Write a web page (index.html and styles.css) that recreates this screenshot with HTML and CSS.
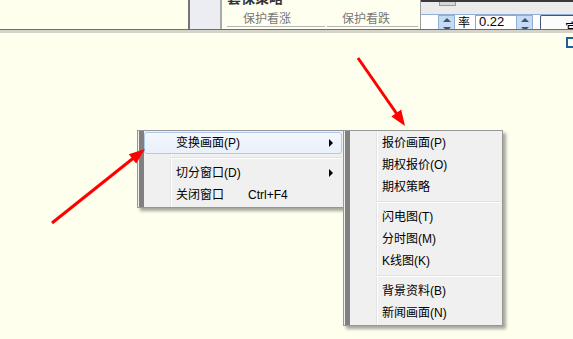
FILE: index.html
```html
<!DOCTYPE html>
<html lang="zh-CN">

<head>
    <meta charset="UTF-8">
    <title>期权画面</title>
    <link rel="stylesheet" href="styles.css">
</head>

<body>

    <div class="topbar">
        <div class="blank"></div>
        <div class="side"></div>
        <div class="strategy">
            <div class="strategy-title">套保策略</div>
            <div class="tabs">
                <div class="tab">保护看涨</div>
                <div class="tab tab-2">保护看跌</div>
            </div>
        </div>
        <div class="panel">
            <div class="hscroll">
                <div class="thumb"></div>
            </div>
            <div class="controls">
                <div class="spin"><i class="up"></i><i class="down"></i></div>
                <span class="rate">率</span>
                <div class="field">0.22</div>
                <div class="spin"><i class="up"></i><i class="down"></i></div>
                <div class="btn">官</div>
            </div>
        </div>
    </div>
    <div class="splitter"></div>
    <div class="corner"><div class="corner-icon"></div></div>

    <!-- 右键菜单 -->
    <div class="menu menu-main">
        <div class="item active"><span class="label">变换画面(P)</span><span class="sub"></span></div>
        <div class="sep"></div>
        <div class="item"><span class="label">切分窗口(D)</span><span class="sub"></span></div>
        <div class="item"><span class="label">关闭窗口</span><span class="key">Ctrl+F4</span></div>
    </div>

    <div class="menu menu-sub">
        <div class="item"><span class="label">报价画面(P)</span></div>
        <div class="item"><span class="label">期权报价(O)</span></div>
        <div class="item"><span class="label">期权策略</span></div>
        <div class="sep"></div>
        <div class="item"><span class="label">闪电图(T)</span></div>
        <div class="item"><span class="label">分时图(M)</span></div>
        <div class="item"><span class="label">K线图(K)</span></div>
        <div class="sep"></div>
        <div class="item"><span class="label">背景资料(B)</span></div>
        <div class="item"><span class="label">新闻画面(N)</span></div>
    </div>

    <!-- 标注箭头 -->
    <svg class="marks" width="573" height="339" viewBox="0 0 573 339">
        <line x1="52" y1="223" x2="136" y2="156" stroke="#ff0000" stroke-width="3" />
        <polygon points="145,149 128.8,154.2 136.2,163.6" fill="#ff0000" />
        <line x1="358" y1="58" x2="399" y2="117" stroke="#ff0000" stroke-width="3" />
        <polygon points="405,126 401.2,109.6 391.4,116.4" fill="#ff0000" />
    </svg>

</body>

</html>
```

FILE: styles.css
```css
* {
    margin: 0;
    padding: 0;
    box-sizing: border-box;
}

html,
body {
    width: 100%;
    height: 100%;
}

body {
    background: #ffffee;
    font-family: "Liberation Sans", "Noto Sans CJK SC", sans-serif;
    font-size: 12px;
    color: #000;
    overflow: hidden;
    position: relative;
}

/* 顶部面板 */
.topbar {
    height: 29px;
    display: flex;
    overflow: hidden;
}

.blank {
    width: 188px;
    flex-shrink: 0;
}

.side {
    width: 34px;
    flex-shrink: 0;
    background: #ececf3;
    border-left: 2px solid #747474;
    border-right: 2px solid #a9a9a9;
}

.strategy {
    width: 198px;
    flex-shrink: 0;
    overflow: hidden;
    background: #fffff0;
}

.strategy-title {
    height: 7px;
    margin-top: -2px;
    padding-left: 5px;
    font-size: 14px;
    line-height: 1;
    font-weight: bold;
    color: #333;
    overflow: hidden;
    display: flex;
    align-items: flex-end;
}

.tabs {
    display: flex;
    gap: 2px;
    margin-left: 5px;
    margin-top: 8px;
}

.tab {
    width: 98px;
    height: 14px;
    line-height: 13px;
    padding-left: 16px;
    border-bottom: 1px solid #b4b4b4;
    color: #777;
    font-size: 12px;
}

.tab-2 {
    width: 91px;
    padding-left: 15px;
}

.panel {
    flex: 1;
    min-width: 0;
    overflow: hidden;
    border-left: 1px solid #9c9c9c;
    display: flex;
    flex-direction: column;
}

.hscroll {
    height: 15px;
    flex-shrink: 0;
    background: #ebebeb;
    border-top: 2px solid #3a3a3a;
    border-bottom: 1px solid #8fb0d2;
    padding-left: 18px;
}

.thumb {
    width: 17px;
    height: 4px;
    background: #d6d6d6;
    border: 1px solid #9a9a9a;
    border-top: none;
}

.controls {
    flex: 1;
    background: #fff;
    display: flex;
    align-items: stretch;
    padding-left: 17px;
}

.spin {
    width: 17px;
    flex-shrink: 0;
    background: #c6dbf2;
    border: 1px solid #90b0d4;
    display: flex;
    flex-direction: column;
    align-items: center;
    justify-content: space-around;
}

.spin i {
    width: 0;
    height: 0;
    border-left: 4px solid transparent;
    border-right: 4px solid transparent;
}

.spin .up {
    border-bottom: 4px solid #36567a;
}

.spin .down {
    border-top: 4px solid #36567a;
}

.rate {
    width: 20px;
    flex-shrink: 0;
    padding-left: 3px;
    font-size: 12px;
    line-height: 14px;
    font-family: "Noto Sans CJK SC", sans-serif;
}

.field {
    width: 41px;
    flex-shrink: 0;
    border: 1px solid #8fa8c4;
    border-right: none;
    padding-left: 3px;
    font-size: 13px;
    line-height: 12px;
}

.btn {
    margin-left: 7px;
    flex: 1;
    min-width: 0;
    border: 1px solid #3e5877;
    border-right: none;
    border-bottom: none;
    border-radius: 2px 0 0 0;
    background: #fbfbfb;
    padding-left: 24px;
    padding-top: 4px;
    font-size: 14px;
    line-height: 14px;
    font-family: "Noto Sans CJK SC", sans-serif;
    white-space: nowrap;
}

.splitter {
    height: 4px;
    border-top: 1px solid #6e6e6e;
    background: #d6d3cb;
}

.corner {
    display: flex;
    justify-content: flex-end;
    padding-top: 4px;
}

.corner-icon {
    width: 7px;
    height: 11px;
    border: 2px solid #1d5f9c;
    border-right: none;
}

/* 右键菜单 */
.menu {
    position: absolute;
    top: 130px;
    border: 1px solid #979797;
    padding: 1px 1px 1px 6px;
    background:
        linear-gradient(to right, transparent 32px, #e3e3e3 32px, #e3e3e3 33px, #ffffff 33px, #ffffff 34px, transparent 34px),
        linear-gradient(to right, #f0f0f0 1px, #808080 1px, #808080 6px, #f0f0f0 6px);
    box-shadow: 3px 3px 3px rgba(0, 0, 0, 0.35);
}

.menu-main {
    left: 137px;
    width: 207px;
}

.menu-sub {
    left: 343px;
    width: 160px;
}

.item {
    height: 22px;
    line-height: 22px;
    padding-left: 32px;
    display: flex;
    align-items: center;
    white-space: nowrap;
}

.item.active {
    border: 1px solid #aecbef;
    border-radius: 3px;
    padding-left: 31px;
    background: linear-gradient(#f4f7fc, #e9f0f9);
}

.label {
    min-width: 72px;
}

.sub {
    margin-left: auto;
    margin-right: 9px;
    width: 0;
    height: 0;
    border-top: 4px solid transparent;
    border-bottom: 4px solid transparent;
    border-left: 4px solid #000;
}

.item.active .sub {
    margin-right: 8px;
}

.sep {
    height: 8px;
    margin-left: 26px;
    background: linear-gradient(to bottom, transparent 3px, #e0e0e0 3px, #e0e0e0 4px, #ffffff 4px, #ffffff 5px, transparent 5px);
}

.marks {
    position: absolute;
    left: 0;
    top: 0;
    pointer-events: none;
}
```
